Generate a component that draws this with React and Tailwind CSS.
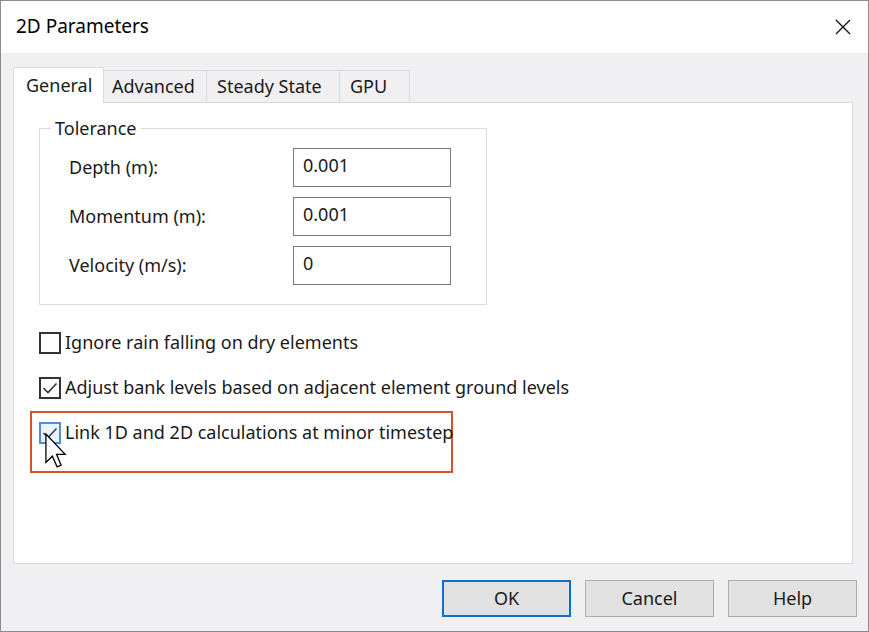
import React from "react";

const font = { fontFamily: '"Segoe UI", "Noto Sans", sans-serif' };

function Check({ hover }) {
  return (
    <div
      className={`w-[22px] h-[22px] shrink-0 border-2 flex items-center justify-center ${
        hover ? "border-[#4a90d6] bg-[#eaf3fb]" : "border-[#333333] bg-white"
      }`}
    >
      <svg width="18" height="18" viewBox="0 0 18 18">
        <polyline
          points="2.5,9 7,13.5 15.5,4.5"
          fill="none"
          stroke={hover ? "#2b4a66" : "#333333"}
          strokeWidth="1.6"
        />
      </svg>
    </div>
  );
}

function Box() {
  return <div className="w-[22px] h-[22px] shrink-0 border-2 border-[#333333] bg-white" />;
}

function Field({ label, value }) {
  return (
    <div className="flex items-center h-[39px]">
      <span className="w-[224px] text-[18px] text-[#1a1a1a]">{label}</span>
      <div className="w-[158px] h-[39px] border border-[#7a7a7a] bg-white pl-[9px] flex items-center pb-[4px] text-[18px] text-[#1a1a1a]">
        {value}
      </div>
    </div>
  );
}

function Cursor() {
  return (
    <svg
      className="absolute left-[13px] top-[20px]"
      width="22"
      height="35"
      viewBox="0 0 12 19"
    >
      <path
        d="M0.5 0.5 L0.5 16 L4 12.6 L6.6 18.4 L8.8 17.5 L6.3 11.6 L11 11.6 Z"
        fill="#ffffff"
        stroke="#000000"
        strokeWidth="0.7"
        strokeLinejoin="miter"
      />
    </svg>
  );
}

export default function App() {
  return (
    <div
      className="w-[869px] h-[632px] border border-[#8c8c8c] bg-[#f0eff1] flex flex-col overflow-hidden"
      style={font}
    >
      {/* title bar */}
      <div className="h-[52px] bg-white flex items-center justify-between pl-[15px] pr-[17px]">
        <span className="text-[19px] text-black pb-[2px]">2D Parameters</span>
        <svg width="16" height="16" viewBox="0 0 16 16">
          <path d="M1 1 L15 15 M15 1 L1 15" stroke="#111111" strokeWidth="1.4" />
        </svg>
      </div>

      <div className="flex-1 pl-[12px] pt-[14px] flex flex-col">
        {/* tabs */}
        <div className="flex items-end">
          <div className="relative z-10 -mb-px w-[91px] h-[36px] bg-white border-l border-t border-r border-[#d9d9d9] flex items-center pl-[12px] text-[18px] text-[#1a1a1a]">
            General
          </div>
          <div className="w-[103px] h-[32px] border-t border-r border-[#d9d9d9] flex items-center pl-[8px] text-[18px] text-[#1a1a1a]">
            Advanced
          </div>
          <div className="w-[133px] h-[32px] border-t border-r border-[#d9d9d9] flex items-center pl-[10px] text-[18px] text-[#1a1a1a]">
            Steady State
          </div>
          <div className="w-[70px] h-[32px] border-t border-r border-[#d9d9d9] flex items-center pl-[10px] text-[18px] text-[#1a1a1a]">
            GPU
          </div>
        </div>

        {/* panel */}
        <div className="w-[840px] h-[462px] bg-white border border-[#d9d9d9] pl-[25px] flex flex-col">
          <div className="relative mt-[25px] w-[448px] h-[177px] border border-[#dcdcdc] pl-[29px] pt-[19px] flex flex-col gap-[10px]">
            <span className="absolute -top-[14px] left-[11px] bg-white px-[4px] text-[18px] leading-[26px] text-[#1a1a1a]">
              Tolerance
            </span>
            <Field label="Depth (m):" value="0.001" />
            <Field label="Momentum (m):" value="0.001" />
            <Field label="Velocity (m/s):" value="0" />
          </div>

          <div className="mt-[27px] h-[22px] flex items-center gap-[4px] text-[18px] leading-[22px] text-[#1a1a1a] whitespace-nowrap">
            <Box />
            <span className="pb-[2px]">Ignore rain falling on dry elements</span>
          </div>
          <div className="mt-[23px] h-[22px] flex items-center gap-[4px] text-[18px] leading-[22px] text-[#1a1a1a] whitespace-nowrap">
            <Check />
            <span className="pb-[2px]">Adjust bank levels based on adjacent element ground levels</span>
          </div>
          <div className="relative mt-[12px] -ml-[9px] w-[423px] h-[62px] border-2 border-[#d5532b] pl-[7px] pt-[9px]">
            <div className="flex items-center gap-[4px] h-[22px] text-[18px] leading-[22px] text-[#1a1a1a] whitespace-nowrap">
              <Check hover />
              <span className="pb-[2px]">Link 1D and 2D calculations at minor timestep</span>
            </div>
            <Cursor />
          </div>
        </div>

        {/* buttons */}
        <div className="mt-[16px] flex justify-end gap-[14px] pr-[11px]">
          <button className="w-[129px] h-[37px] bg-[#e1e1e1] border-2 border-[#0a6fd0] text-[18px] text-[#1a1a1a]">
            OK
          </button>
          <button className="w-[129px] h-[37px] bg-[#e1e1e1] border border-[#adadad] text-[18px] text-[#1a1a1a]">
            Cancel
          </button>
          <button className="w-[129px] h-[37px] bg-[#e1e1e1] border border-[#adadad] text-[18px] text-[#1a1a1a]">
            Help
          </button>
        </div>
      </div>
    </div>
  );
}
